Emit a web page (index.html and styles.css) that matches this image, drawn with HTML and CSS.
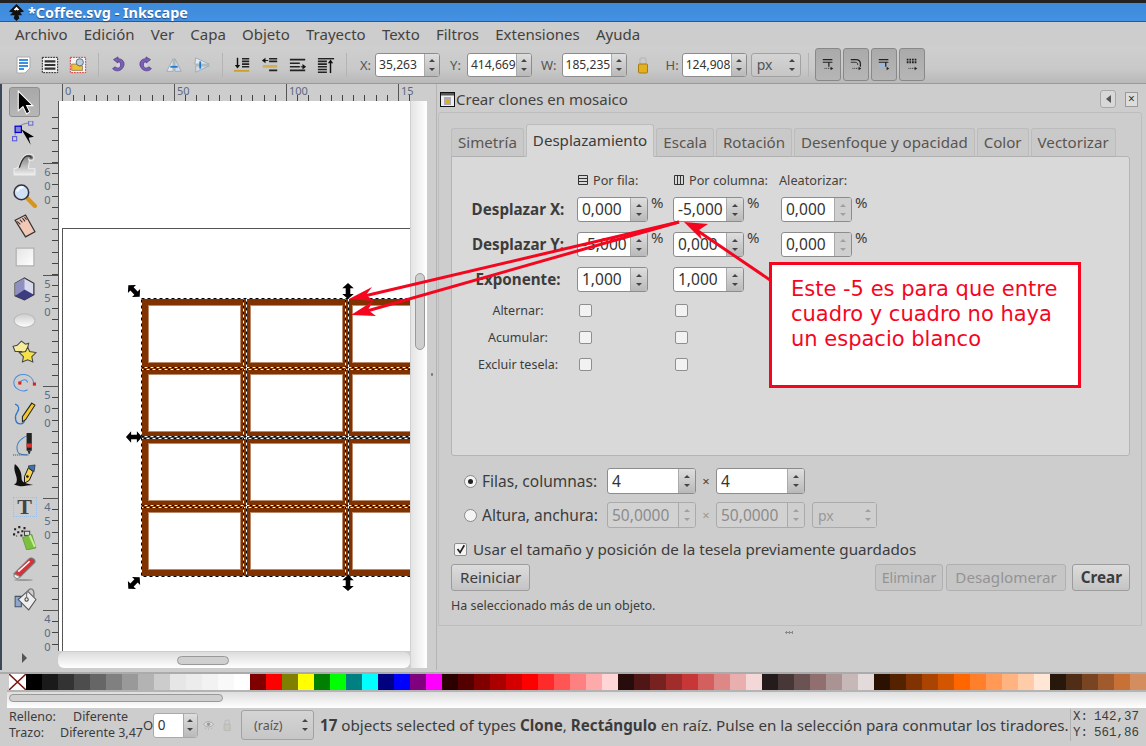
FILE: index.html
```html
<!doctype html>
<html lang="es">
    <head>
        <meta charset="UTF-8" />
        <title>*Coffee.svg - Inkscape</title>
        <link rel="stylesheet" href="styles.css">
    </head>
    <body>
        <div class="window">
            <div class="titlebar">
                <svg class="app-logo" viewBox="0 0 18 18"><path d="M9 0 L17 8 L13 9 L15 12 L11 12 L12 15 L9 18 L6 15 L7 12 L2 12 L5 9 L1 8 Z" fill="#111"/><path d="M6 6 L9 3 L12 6 L10 7 L9 6 L8 7 Z" fill="#fff"/></svg>
                <span>*Coffee.svg - Inkscape</span>
            </div>

            <div class="menubar">
                <span>Archivo</span><span>Edición</span><span>Ver</span><span>Capa</span><span>Objeto</span><span>Trayecto</span><span>Texto</span><span>Filtros</span><span>Extensiones</span><span>Ayuda</span>
            </div>

            <div class="toolbar">
                <svg class="tb-icon first" viewBox="0 0 15 18"><path d="M1 1 H14 V12 L9 17 H1 Z" fill="#fff" stroke="#aaa"/><path d="M3 4 H12 M3 7 H12 M3 10 H12 M3 13 H8" stroke="#3f8ee0" stroke-width="2"/></svg>
                <svg class="tb-icon" viewBox="0 0 20 20"><rect x="1.5" y="1.5" width="17" height="17" fill="#eee" stroke="#111" stroke-dasharray="2 1"/><path d="M4 6 H16 M4 10 H16 M4 14 H16" stroke="#333" stroke-width="2.4"/></svg>
                <svg class="tb-icon" viewBox="0 0 20 20"><rect x="1.5" y="1.5" width="17" height="17" fill="#f4f4f4" stroke="#d22" stroke-dasharray="2 1"/><path d="M3 9 H9 L11 11 H15 V16 H3 Z" fill="#f0c030" stroke="#986"/><circle cx="12" cy="7" r="4" fill="#bcd" stroke="#567"/></svg>
                <i class="tb-sep"></i>
                <svg class="tb-icon small" viewBox="0 0 20 20"><path d="M5 4 L10 1 V3 C16 3 18 8 16 12 C14 17 7 18 4 14 L7 12 C9 15 13 13 13 10 C13 7 11 6 10 6 V8 Z" fill="#7a5fb5" stroke="#4b3580" stroke-width=".8"/><circle cx="10" cy="10" r="2" fill="#d8cfee"/></svg>
                <svg class="tb-icon small" viewBox="0 0 20 20"><path d="M15 4 L10 1 V3 C4 3 2 8 4 12 C6 17 13 18 16 14 L13 12 C11 15 7 13 7 10 C7 7 9 6 10 6 V8 Z" fill="#7a5fb5" stroke="#4b3580" stroke-width=".8"/><circle cx="10" cy="10" r="2" fill="#d8cfee"/></svg>
                <svg class="tb-icon" viewBox="0 0 20 20"><path d="M9 3 V17 H2 Z" fill="#e4e8f0" stroke="#9aa"/><path d="M11 3 V17 H18 Z" fill="#d0dcf0" stroke="#9aa"/><path d="M6 12 H14" stroke="#27c" stroke-width="2"/></svg>
                <svg class="tb-icon" viewBox="0 0 20 20"><path d="M2 9 H18 L3 2 Z" fill="#e4e8f0" stroke="#9aa"/><path d="M3 11 H18 L3 18 Z" fill="#d0dcf0" stroke="#9aa"/><path d="M8 6 V14" stroke="#27c" stroke-width="2"/></svg>
                <i class="tb-sep"></i>
                <svg class="tb-icon" viewBox="0 0 20 20"><path d="M10 3 H18 M10 6 H18 M10 9 H18 M10 12 H18" stroke="#222" stroke-width="1.8"/><path d="M5 2 V11" stroke="#111" stroke-width="1.6"/><path d="M2 10 H8 L5 14 Z" fill="#111"/><path d="M1 16.5 H18" stroke="#c8a030" stroke-width="2"/></svg>
                <svg class="tb-icon" viewBox="0 0 20 20"><path d="M9 3 H18 M9 6 H18 M9 16 H18" stroke="#222" stroke-width="1.8"/><path d="M4 5 H8" stroke="#111"/><path d="M1 5 L5 2 V8 Z" fill="#111"/><rect x="2" y="10" width="16" height="3" fill="#d0b050"/></svg>
                <svg class="tb-icon" viewBox="0 0 20 20"><path d="M1 4 H18 M1 8 H12 M1 12 H12 M1 16 H18" stroke="#222" stroke-width="1.8"/><path d="M13 12 H17" stroke="#111"/><path d="M19 12 L15 9 V15 Z" fill="#111"/></svg>
                <svg class="tb-icon" viewBox="0 0 20 20"><path d="M1 3 H19" stroke="#222" stroke-width="1.6"/><path d="M1 6 H11 M1 9 H11 M1 12 H11 M1 15 H11 M1 18 H11" stroke="#222" stroke-width="1.8"/><path d="M15 7 V19" stroke="#111" stroke-width="1.6"/><path d="M12 8 H18 L15 4 Z" fill="#111"/></svg>
                <i class="tb-sep"></i>

                <span class="coord-label x">X:</span>
                <div class="spin coord"><span class="spin-val">35,263</span><span class="spin-btn"></span></div>
                <span class="coord-label y">Y:</span>
                <div class="spin coord"><span class="spin-val">414,669</span><span class="spin-btn"></span></div>
                <span class="coord-label w">W:</span>
                <div class="spin coord"><span class="spin-val">185,235</span><span class="spin-btn"></span></div>
                <svg class="lock" viewBox="0 0 12 18"><path d="M3 8 V4 C3 1 9 1 9 4 V8" fill="none" stroke="#bbb" stroke-width="1.6"/><rect x="1.5" y="8" width="9" height="9" rx="1" fill="#e2b020" stroke="#a87c10"/></svg>
                <span class="coord-label h">H:</span>
                <div class="spin coord"><span class="spin-val">124,908</span><span class="spin-btn"></span></div>
                <div class="combo unit"><span>px</span><span class="spin-btn plain"></span></div>
                <i class="tb-sep wide"></i>
                <div class="toggles">
                    <div class="toggle"><svg viewBox="0 0 16 16"><path d="M2 3 H13 M2 6 H13 M9 6 V11" stroke="#222" stroke-width="1.4" fill="none"/><path d="M4 13 H11" stroke="#222" stroke-dasharray="1 1"/><path d="M11 11 L14 13 L11 15 Z" fill="#222"/></svg></div>
                    <div class="toggle"><svg viewBox="0 0 16 16"><path d="M2 3 H8 C11 3 13 5 13 8 V11" stroke="#222" stroke-width="1.4" fill="none"/><path d="M2 6 H7 C9 6 10 7 10 9" stroke="#222" fill="none"/><path d="M4 13 H11" stroke="#222" stroke-dasharray="1 1"/><path d="M11 11 L14 13 L11 15 Z" fill="#222"/></svg></div>
                    <div class="toggle"><svg viewBox="0 0 16 16"><rect x="2" y="7" width="8" height="5" fill="#9db8d8"/><path d="M2 3 H13 M2 6 H13 M10 6 V11" stroke="#222" stroke-width="1.4" fill="none"/><path d="M11 11 L14 13 L11 15 Z" fill="#222"/></svg></div>
                    <div class="toggle"><svg viewBox="0 0 16 16"><path d="M2 3 H13 M2 6 H13" stroke="#222" stroke-width="2.2" stroke-dasharray="2 1" fill="none"/><path d="M4 13 H11" stroke="#222" stroke-dasharray="1 1" fill="none"/><path d="M11 11 L14 13 L11 15 Z" fill="#222"/></svg></div>
                </div>
            </div>

            <div class="workspace">
                <div class="toolbox">
                    <div class="tool active"><svg viewBox="0 0 24 24"><path d="M6 1 V20 L10.500 16 L14 23 L17 21 L14 15 H20 Z" fill="#000" stroke="#fff" stroke-width="1"/></svg></div>
                    <div class="tool"><svg viewBox="0 0 24 24"><path d="M3 14 C3 6 8 3 16 2" fill="none" stroke="#889"/><rect x="0.500" y="15" width="4" height="4" fill="none" stroke="#55d"/><rect x="16" y="0" width="4" height="4" fill="none" stroke="#66d"/><rect x="3" y="5" width="6" height="6" fill="#88c" stroke="#00d" stroke-width="1.200"/><path d="M9 8 L21 15 L16 16 L18 23 Z" fill="#000"/></svg></div>
                    <div class="tool"><svg viewBox="0 0 24 24"><defs><linearGradient id="tw" x1="0" y1="0" x2="0" y2="1"><stop offset="0" stop-color="#777"/><stop offset="1" stop-color="#eee"/></linearGradient></defs><path d="M2 22 V16 C8 16 7 10 10 6 C13 1 20 1 21 5 C22 9 16 8 16 7 C18 10 15 12 16 16 H22 V22 Z" fill="url(#tw)" stroke="#eee"/><path d="M7 15 C9 10 10 5 14 4 C17 3 19 5 18 6" fill="none" stroke="#333" stroke-width="1.300"/></svg></div>
                    <div class="tool"><svg viewBox="0 0 24 24"><path d="M14 14 L22 22" stroke="#d8941a" stroke-width="4" stroke-linecap="round"/><circle cx="9" cy="9" r="7" fill="#cfe2f5" stroke="#334" stroke-width="1.500"/><path d="M5 8 C6 5 8 4 11 4" stroke="#fff" stroke-width="2" fill="none"/></svg></div>
                    <div class="tool"><svg viewBox="0 0 24 24"><path d="M3 6 L13 1 L22 17 L13 22 Z" fill="#f3c8b4" stroke="#333" stroke-width="1.200"/><path d="M5 7 L8 10 M7.500 5.500 L10 8 M10 4 L12.500 7 M12 3 L14 5.500" stroke="#333"/></svg></div>
                    <div class="tool"><svg viewBox="0 0 24 24"><defs><linearGradient id="rc" x1="0" y1="0" x2="1" y2="1"><stop offset="0" stop-color="#e4e4e4"/><stop offset="1" stop-color="#fff"/></linearGradient></defs><rect x="4" y="3" width="17" height="17" fill="url(#rc)" stroke="#aaa"/></svg></div>
                    <div class="tool"><svg viewBox="0 0 24 24"><path d="M12 1 L21 6 V17 L12 22 L3 18 V6 Z" fill="#d8d8ee" stroke="#333" stroke-width="1.200"/><path d="M12 1 V12 L3 18 V6 Z" fill="#8f8fc0"/><path d="M12 12 L21 17 L12 22 L3 18 Z" fill="#3c3c80"/></svg></div>
                    <div class="tool"><svg viewBox="0 0 24 24"><defs><linearGradient id="el" x1="0" y1="0" x2="0" y2="1"><stop offset="0" stop-color="#ccc"/><stop offset="1" stop-color="#fff"/></linearGradient></defs><ellipse cx="12" cy="12" rx="10" ry="6.500" fill="url(#el)" stroke="#bbb"/></svg></div>
                    <div class="tool"><svg viewBox="0 0 24 24"><path d="M9 2 L13 5 L16 4 L15 9 L12 14 L9 12 H3 L1 7 L5 6 Z" fill="#f7ec9c" stroke="#444"/><path d="M15 8 L17 12 L23 13 L19 17 L20 22 L15 20 L10 22 L11 17 L7 13 L13 12 Z" fill="#f3e04a" stroke="#444"/></svg></div>
                    <div class="tool"><svg viewBox="0 0 24 24"><path d="M21 13 C20 3 5 1 2 10 C0 18 10 22 15 19" fill="none" stroke="#4a8ee0" stroke-width="1"/><path d="M8 13 C8 9 14 8 15 12" fill="none" stroke="#4a8ee0"/><rect x="6" y="11" width="3" height="3" fill="#d22"/><rect x="20" y="12" width="3" height="3" fill="#d22"/></svg></div>
                    <div class="tool"><svg viewBox="0 0 24 24"><path d="M3 3 C6 4 8 7 5 11 C2 15 3 22 8 22 C11 22 12 20 12 18" fill="none" stroke="#2f75c8" stroke-width="1.200"/><path d="M19 2 L22 4 L13 18 L10 20 L10 15 Z" fill="#f0c830" stroke="#222"/></svg></div>
                    <div class="tool"><svg viewBox="0 0 24 24"><path d="M16 3 C8 6 2 12 6 20 C7 21 9 22 16 22" fill="none" stroke="#3a7ec8"/><path d="M1 22 H14" stroke="#445" stroke-dasharray="1 1"/><rect x="14" y="1" width="5" height="17" fill="#222"/><rect x="14" y="11" width="5" height="4" fill="#d33"/><path d="M15 18 H18 L17 21 H16 Z" fill="#333"/></svg></div>
                    <div class="tool"><svg viewBox="0 0 26 26"><path d="M3 1 C1 8 5 12 5 17 C5 21 4 22 2 22 C10 26 14 23 22 23 C16 21 10 21 10 16 C10 11 9 6 3 1 Z" fill="#111"/><path d="M17 5 L22 9 L18 18 L13 21 L13 14 Z" fill="#f3d050" stroke="#111"/><path d="M17 3 L24 2 L23 9 L18 6 Z" fill="#3f70b0" stroke="#111" stroke-width=".6"/><circle cx="16" cy="14" r="1.300" fill="#111"/></svg></div>
                    <div class="tool text-tool"><span class="t-glyph">T</span></div>
                    <div class="tool"><svg viewBox="0 0 24 24"><path d="M2 3 h2 v2 h-2z M6 1 h2 v2 h-2z M5 6 h2 v2 h-2z M1 8 h2 v2 h-2z M9 5 h2 v2 h-2z M8 9 h2 v2 h-2z M11 2 h2 v2 h-2z M4 10 h1 v1 h-1z" fill="#222"/><rect x="12" y="6" width="5" height="4" fill="#ddd" stroke="#444"/><path d="M10 12 L19 9 L23 22 L14 24 Z" fill="#7cc040" stroke="#4c8c20" stroke-width=".6"/><path d="M17 10 L22 21" stroke="#c8ec98" stroke-width="2"/></svg></div>
                    <div class="tool"><svg viewBox="0 0 24 24"><path d="M2 17 L16 3 C18 1 20 2 21 3 C23 5 22 6 21 7 L8 20 H4 Z" fill="#d6323a" stroke="#777"/><path d="M2 17 L8 20 L5 22 L2 20 Z" fill="#eee" stroke="#888"/><path d="M6 15 L17 5" stroke="#fff" stroke-width="1.500"/><ellipse cx="11" cy="23" rx="9" ry="1" fill="#999"/></svg></div>
                    <div class="tool"><svg viewBox="0 0 24 24"><path d="M3 9 H9 V19 H3 Z" fill="#8ea6d0" stroke="#456"/><path d="M6 12 L15 4 L23 12 L16 22 Z" fill="#eee" stroke="#555"/><path d="M14 10 C13 2 20 -1 21 5 L21 10" fill="none" stroke="#777" stroke-width="1.200"/><circle cx="14" cy="12" r="1.600" fill="none" stroke="#444"/></svg></div>
                    <div class="tool more"><i class="more-arrow"></i></div>
                </div>

                <div class="canvas-area">
                    <div class="ruler-top">
                        <span class="rt-num n0">0</span><span class="rt-num n50">50</span><span class="rt-num n100">100</span><span class="rt-num n150">15</span>
                    </div>
                    <div class="ruler-left">
                        <span class="rl-num r600">600</span>
                        <span class="rl-num r550">550</span>
                        <span class="rl-num r500">500</span>
                        <span class="rl-num r450">450</span>
                        <span class="rl-num r400">400</span>
                    </div>
                    <div class="canvas">
                        <div class="page"></div>
                        <svg id="tiles" class="tiles" width="351" height="550"></svg>
                        <svg class="handles" width="351" height="550">
                            <defs>
                                <path id="dbl" d="M-7 0 L-2.500 -5 V-2 H2.500 V-5 L7 0 L2.500 5 V2 H-2.500 V5 Z" fill="#000"/>
                            </defs>
                            <use href="#dbl" transform="translate(75 190) rotate(45) scale(1.150)"/>
                            <use href="#dbl" transform="translate(289 190) rotate(90) scale(1.150)"/>
                            <use href="#dbl" transform="translate(75 336) scale(1.150)"/>
                            <use href="#dbl" transform="translate(75 482) rotate(-45) scale(1.150)"/>
                            <use href="#dbl" transform="translate(289 482) rotate(90) scale(1.150)"/>
                        </svg>
                    </div>
                    <div class="vscroll"><div class="vthumb"></div></div>
                    <div class="hscroll-canvas"><div class="hthumb"></div></div>
                </div>

                <div class="pane-grip"></div>

                <div class="dialog">
                    <div class="dialog-head">
                        <svg class="dialog-icon" viewBox="0 0 15 15"><rect x=".5" y=".5" width="14" height="14" fill="#eee" stroke="#111"/><rect x="1" y="1" width="13" height="2.500" fill="#555"/><path d="M4 5 H11 V13 H4 Z" fill="#aab"/><rect x="6" y="8" width="3" height="4" fill="#d8b030"/></svg>
                        <span class="dialog-title">Crear clones en mosaico</span>
                        <div class="dock-btn"><i></i></div>
                        <div class="close-btn">×</div>
                    </div>
                    <div class="dialog-body">
                        <div class="tabs">
                            <span class="tab tab-sim">Simetría</span>
                            <span class="tab active">Desplazamiento</span>
                            <span class="tab">Escala</span>
                            <span class="tab">Rotación</span>
                            <span class="tab">Desenfoque y opacidad</span>
                            <span class="tab">Color</span>
                            <span class="tab">Vectorizar</span>
                        </div>
                        <div class="notebook">
                            <div class="offset-grid">
                                <span></span>
                                <span class="col-head"><svg viewBox="0 0 12 12"><path d="M1.500 1.500 H10.500 V10.500 H1.500 Z M1.500 4.500 H10.500 M1.500 7.500 H10.500" fill="none" stroke="#333"/></svg>Por fila:</span>
                                <span class="col-head"><svg viewBox="0 0 12 12"><path d="M1.500 1.500 H10.500 V10.500 H1.500 Z M4.500 1.500 V10.500 M7.500 1.500 V10.500" fill="none" stroke="#333"/></svg>Por columna:</span>
                                <span class="col-head plain">Aleatorizar:</span>

                                <span class="row-label">Desplazar X:</span>
                                <div class="cell"><div class="spin num"><span class="spin-val">0,000</span><span class="spin-btn"></span></div><span class="pct">%</span></div>
                                <div class="cell"><div class="spin num"><span class="spin-val">-5,000</span><span class="spin-btn"></span></div><span class="pct">%</span></div>
                                <div class="cell"><div class="spin num"><span class="spin-val">0,000</span><span class="spin-btn faded"></span></div><span class="pct">%</span></div>

                                <span class="row-label">Desplazar Y:</span>
                                <div class="cell"><div class="spin num"><span class="spin-val">-5,000</span><span class="spin-btn"></span></div><span class="pct">%</span></div>
                                <div class="cell"><div class="spin num"><span class="spin-val">0,000</span><span class="spin-btn"></span></div><span class="pct">%</span></div>
                                <div class="cell"><div class="spin num"><span class="spin-val">0,000</span><span class="spin-btn faded"></span></div><span class="pct">%</span></div>

                                <span class="row-label">Exponente:</span>
                                <div class="cell"><div class="spin num"><span class="spin-val">1,000</span><span class="spin-btn"></span></div></div>
                                <div class="cell"><div class="spin num"><span class="spin-val">1,000</span><span class="spin-btn"></span></div></div>
                                <span></span>

                                <span class="check-label">Alternar:</span>
                                <div class="cell"><i class="check"></i></div>
                                <div class="cell"><i class="check"></i></div>
                                <span></span>

                                <span class="check-label">Acumular:</span>
                                <div class="cell"><i class="check"></i></div>
                                <div class="cell"><i class="check"></i></div>
                                <span></span>

                                <span class="check-label">Excluir tesela:</span>
                                <div class="cell"><i class="check"></i></div>
                                <div class="cell"><i class="check"></i></div>
                                <span></span>
                            </div>
                        </div>

                        <div class="size-row">
                            <i class="radio on"></i>
                            <span class="size-label">Filas, columnas:</span>
                            <div class="spin size"><span class="spin-val">4</span><span class="spin-btn"></span></div>
                            <span class="times">×</span>
                            <div class="spin size"><span class="spin-val">4</span><span class="spin-btn"></span></div>
                        </div>
                        <div class="size-row">
                            <i class="radio"></i>
                            <span class="size-label">Altura, anchura:</span>
                            <div class="spin size off"><span class="spin-val">50,0000</span><span class="spin-btn faded"></span></div>
                            <span class="times off-text">×</span>
                            <div class="spin size off"><span class="spin-val">50,0000</span><span class="spin-btn faded"></span></div>
                            <div class="combo unit-off"><span>px</span><span class="spin-btn plain faded"></span></div>
                        </div>
                        <div class="use-saved">
                            <i class="check checked"><svg viewBox="0 0 13 13"><path d="M3 6 L6 10 L11 1.500" fill="none" stroke="#222" stroke-width="2"/></svg></i>
                            <span>Usar el tamaño y posición de la tesela previamente guardados</span>
                        </div>
                        <div class="button-row">
                            <span class="btn reset">Reiniciar</span>
                            <span class="btn off b-elim">Eliminar</span>
                            <span class="btn off">Desaglomerar</span>
                            <span class="btn primary">Crear</span>
                        </div>
                        <div class="dialog-status">Ha seleccionado más de un objeto.</div>
                    </div>
                    <div class="dialog-grip"></div>
                </div>
            </div>

            <div id="palette" class="palette"><span class="swatch none"><svg viewBox="0 0 17 16"><path d="M0 0 L17 16 M17 0 L0 16" stroke="#7a1414" stroke-width="1.500"/></svg></span></div>
            <div class="palette-scroll"><div class="palette-thumb"></div></div>

            <div class="statusbar">
                <div class="style-info">
                    <span>Relleno:</span><span class="val-a">Diferente</span>
                    <span>Trazo:</span><span class="val-b">Diferente 3,47</span>
                </div>
                <span class="opacity-label">O:</span>
                <div class="spin opacity"><span class="spin-val">0</span><span class="spin-btn"></span></div>
                <svg class="eye" viewBox="0 0 16 16"><path d="M1 7 C4 2 12 2 15 7 C12 12 4 12 1 7 Z" fill="#ddd" stroke="#999"/><circle cx="8" cy="7" r="2.500" fill="#999"/><path d="M3 12 L4 14 M8 13 V15 M13 12 L12 14" stroke="#aaa"/></svg>
                <svg class="lock-off" viewBox="0 0 12 18"><path d="M3 8 V4 C3 1 9 1 9 4 V8" fill="none" stroke="#bbb" stroke-width="1.600"/><rect x="1.500" y="8" width="9" height="9" rx="1" fill="#c6c6c0" stroke="#b4b4ac"/></svg>
                <div class="combo layer"><span>(raíz)</span><span class="spin-btn plain"></span></div>
                <div class="message"><b>17</b> objects selected of types <b>Clone</b>, <b>Rectángulo</b> en raíz. Pulse en la selección para conmutar los tiradores.</div>
                <div class="cursor-pos">
                    <span>X:</span><span>142,37</span>
                    <span>Y:</span><span>561,86</span>
                </div>
            </div>

            <svg class="marks" width="1146" height="746">
                <g fill="none" stroke="#f5061f" stroke-width="3">
                    <path d="M679 222 L360 297"/>
                    <path d="M679 222 L360 313"/>
                    <path d="M770 280 L695 229"/>
                </g>
                <g fill="#f5061f">
                    <path d="M349 299 L372 287 L366 295 L374 301 Z"/>
                    <path d="M351 315 L373 301 L368 310 L376 316 Z"/>
                    <path d="M684 222 L708 224 L699 230 L702 240 Z"/>
                </g>
            </svg>
            <div class="note">Este -5 es para que entre cuadro y cuadro no haya un espacio blanco</div>
        </div>
        <script src="script.js"></script>
    </body>
</html>
```

FILE: styles.css
```css
html,
body {
    margin: 0;
    height: 100%;
    overflow: hidden;
}
body {
    font-family: "Noto Sans", "Open Sans", sans-serif;
    font-size: 14px;
    color: #3c3c3c;
    background-color: #cdcdcd;
}
svg {
    display: block;
}
.window {
    position: relative;
    width: 1146px;
    height: 746px;
    overflow: hidden;
    display: flex;
    flex-direction: column;
    background-color: #cdcdcd;
    border-top: 3px solid #222;
    box-sizing: border-box;
}

/* title and menu */
.titlebar {
    height: 19px;
    flex: none;
    box-sizing: border-box;
    display: flex;
    align-items: center;
    gap: 3px;
    padding-left: 8px;
    background: linear-gradient(#3d8bdc, #4490e2);
    border-bottom: 1px solid #2a5a90;
    color: #fff;
    font-weight: bold;
    font-size: 14.4px;
    text-shadow: 0 1px 1px #1d4f88;
}
.app-logo {
    width: 17px;
    height: 17px;
}
.menubar {
    height: 24px;
    flex: none;
    display: flex;
    align-items: center;
    gap: 16.2px;
    padding-left: 15px;
    font-size: 15px;
    color: #45413c;
}

/* top toolbar */
.toolbar {
    height: 38px;
    flex: none;
    display: flex;
    align-items: center;
    padding-left: 16px;
    background: linear-gradient(#cfcfcf, #c9c9c9 60%, #b9b9b9);
    border-bottom: 1px solid #999;
    box-sizing: border-box;
}
.tb-icon {
    width: 18px;
    height: 18px;
    margin-right: 10px;
}
.tb-icon.first {
    width: 15px;
    margin-right: 10px;
}
.tb-sep {
    width: 1px;
    height: 24px;
    background-color: #b4b4b4;
    margin: 0 10px 0 1px;
}
.tb-sep.wide {
    margin: 0 6px 0 7px;
}
.coord-label {
    font-size: 13px;
    color: #555;
}
.coord-label.x {
    margin: 0 4px 0 3px;
}
.coord-label.y {
    margin: 0 6px 0 10px;
}
.coord-label.w {
    margin: 0 5px 0 9px;
}
.coord-label.h {
    margin: 0 3px 0 17px;
}
.lock {
    width: 12px;
    height: 18px;
    margin-left: 10px;
}

/* spin buttons and combo boxes */
.spin {
    display: flex;
    flex: none;
    box-sizing: border-box;
    border: 1px solid #8c8c8c;
    border-radius: 3px;
    background-color: #fff;
    color: #333;
    overflow: hidden;
}
.spin-val {
    flex: 1;
    min-width: 0;
    display: flex;
    align-items: center;
    padding-left: 4px;
    white-space: nowrap;
}
.spin-btn {
    position: relative;
    display: block;
    flex: none;
    width: 16px;
    border-left: 1px solid #aaa;
    background: linear-gradient(#dedede, #b9b9b9);
}
.spin-btn::before,
.spin-btn::after {
    content: "";
    position: absolute;
    left: 50%;
    margin-left: -3px;
    border-left: 3px solid transparent;
    border-right: 3px solid transparent;
}
.spin-btn::before {
    top: 50%;
    margin-top: -6px;
    border-bottom: 3px solid #444;
}
.spin-btn::after {
    top: 50%;
    margin-top: 3px;
    border-top: 3px solid #444;
}
.spin-btn.plain {
    background: none;
    border-left: none;
}
.spin-btn.faded {
    background: #cfcfcf;
}
.spin-btn.faded::before {
    border-bottom-color: #a0a0a0;
}
.spin-btn.faded::after {
    border-top-color: #a0a0a0;
}
.spin.coord {
    width: 65px;
    height: 24px;
    font-size: 12.1px;
}
.spin.coord .spin-val {
    padding-left: 3px;
}
.spin.coord .spin-btn {
    width: 14px;
}
.combo {
    display: flex;
    flex: none;
    box-sizing: border-box;
    justify-content: space-between;
    border: 1px solid #a2a2a2;
    border-radius: 3px;
    background: linear-gradient(#d4d4d4, #c6c6c6);
    color: #555;
    font-size: 14px;
}
.combo > span:first-child {
    align-self: center;
}
.combo.unit {
    width: 50px;
    height: 24px;
    margin-left: 4px;
    padding-left: 5px;
}
.toggles {
    display: flex;
    gap: 2px;
}
.toggle {
    width: 26px;
    height: 33px;
    box-sizing: border-box;
    padding: 8px 5px;
    border: 1px solid #888;
    border-radius: 3px;
    background: linear-gradient(#aaa, #b6b6b6);
}

/* main area */
.workspace {
    height: 586px;
    flex: none;
    display: flex;
}
.toolbox {
    width: 41px;
    flex: none;
    box-sizing: border-box;
    border-left: 2px solid #3c4858;
    padding: 3px 0 0 7px;
    display: flex;
    flex-direction: column;
}
.tool {
    width: 31px;
    height: 31.100px;
    flex: none;
    box-sizing: border-box;
    padding: 3px;
    display: flex;
    align-items: center;
    justify-content: center;
}
.tool svg {
    width: 25px;
    height: 25px;
    flex: none;
}
.tool.active {
    height: 30px;
    margin-bottom: 1px;
    border: 1px solid #8f8f8f;
    border-radius: 3px;
    background: linear-gradient(#a8a8a8, #b6b6b6);
}
.t-glyph {
    width: 22px;
    height: 18px;
    border: 1px dotted #9cc0ea;
    font-family: "Liberation Serif", serif;
    font-weight: bold;
    font-size: 22px;
    line-height: 18px;
    text-align: center;
    color: #444;
}
.more {
    margin-top: 27px;
}
.more-arrow {
    border-left: 5px solid #555;
    border-top: 5px solid transparent;
    border-bottom: 5px solid transparent;
}

.canvas-area {
    position: relative;
    width: 387px;
    flex: none;
}
.ruler-top {
    position: absolute;
    left: 17px;
    top: 0;
    width: 356px;
    height: 17px;
    border-left: 1px solid transparent;
    overflow: hidden;
    background-image:
        repeating-linear-gradient(to right, transparent 0, transparent 10.200px, #444 10.200px, #444 11.200px);
    background-size: 352px 6px;
    background-position: 4px bottom;
    background-repeat: no-repeat;
}
.rt-num {
    position: absolute;
    top: 0;
    padding-left: 2px;
    height: 17px;
    border-left: 1px solid #555;
    font-size: 11px;
    line-height: 13px;
    color: #5a6a82;
}
.n0 { left: 3px; }
.n50 { left: 115px; }
.n100 { left: 227px; }
.n150 { left: 339px; }
.ruler-left {
    position: absolute;
    left: 0;
    top: 17px;
    width: 17px;
    height: 550px;
    border-right: 1px solid #555;
    background-image:
        repeating-linear-gradient(to bottom, transparent 0, transparent 10.200px, #444 10.200px, #444 11.200px);
    background-size: 6px 100%;
    background-position: right 6px;
    background-repeat: no-repeat;
}
.rl-num {
    position: absolute;
    left: 2px;
    width: 8px;
    padding-right: 7px;
    border-top: 1px solid #555;
    writing-mode: vertical-rl;
    text-orientation: upright;
    letter-spacing: -1px;
    font-size: 11px;
    line-height: 8px;
    color: #5a6a82;
}
.r600 { top: 62px; }
.r550 { top: 174px; }
.r500 { top: 285px; }
.r450 { top: 397px; }
.r400 { top: 509px; }
.canvas {
    position: absolute;
    left: 18px;
    top: 17px;
    width: 351px;
    height: 550px;
    background-color: #fff;
    overflow: hidden;
}
.page {
    position: absolute;
    left: 3px;
    top: 127px;
    width: 400px;
    height: 500px;
    border: 1px solid #555;
}
.tiles,
.handles {
    position: absolute;
    left: 0;
    top: 0;
}
.vscroll {
    position: absolute;
    left: 369px;
    top: 17px;
    width: 17px;
    height: 567px;
    background: linear-gradient(to right, #e4e4e4, #fff);
    border-left: 1px solid #d0d0d0;
    box-sizing: border-box;
}
.vthumb {
    position: absolute;
    left: 4px;
    top: 172px;
    width: 8px;
    height: 75px;
    border: 1px solid #999;
    border-radius: 5px;
    background-color: #cfcfcf;
}
.hscroll-canvas {
    position: absolute;
    left: 17px;
    top: 568px;
    width: 352px;
    height: 16px;
    border-radius: 6px;
    background: linear-gradient(#dcdcdc, #fff);
}
.hthumb {
    position: absolute;
    left: 119px;
    top: 4px;
    width: 50px;
    height: 7px;
    border: 1px solid #999;
    border-radius: 5px;
    background-color: #cfcfcf;
}
.pane-grip {
    width: 8px;
    flex: none;
    background:
        radial-gradient(circle, #777 1px, transparent 1.500px) center 289px / 4px 3px no-repeat;
}

/* tile dialog */
.dialog {
    flex: 1;
    min-width: 0;
    box-sizing: border-box;
    padding: 0 4px 0 0;
    border-left: 1px solid #b4b4b4;
}
.dialog-head {
    box-sizing: border-box;
    height: 28px;
    display: flex;
    align-items: center;
    padding: 2px 4px 0 3px;
}
.dialog-icon {
    width: 15px;
    height: 15px;
    margin-right: 1px;
}
.dialog-title {
    flex: 1;
    font-size: 15px;
    color: #45413c;
}
.dock-btn {
    width: 16px;
    height: 18px;
    box-sizing: border-box;
    border: 1px solid #a8a8a8;
    border-radius: 3px;
    background-color: #d8d8d8;
    margin-right: 9px;
    display: flex;
    align-items: center;
    justify-content: center;
}
.dock-btn i {
    border-right: 5px solid #555;
    border-top: 4px solid transparent;
    border-bottom: 4px solid transparent;
}
.close-btn {
    width: 11px;
    height: 13px;
    border: 1px solid #999;
    background-color: #ddd;
    font-size: 12px;
    line-height: 12px;
    text-align: center;
    color: #333;
}
.dialog-body {
    box-sizing: border-box;
    height: 514px;
    margin-left: 1px;
    padding: 11px 11px 0 12px;
    border: 1px solid #bdbdbd;
    border-radius: 3px 3px 0 0;
    font-size: 15.2px;
}
.tabs {
    display: flex;
    align-items: flex-end;
    gap: 2px;
    height: 33px;
    position: relative;
    z-index: 1;
    margin-bottom: -1px;
    font-size: 15.100px;
}
.tab {
    box-sizing: border-box;
    height: 29px;
    padding: 3px 6px 0;
    border: 1px solid #bcbcbc;
    border-bottom: 1px solid #b0b0b0;
    border-radius: 3px 3px 0 0;
    background-color: #c9c9c9;
    color: #5a5550;
    white-space: nowrap;
}
.tab.active {
    height: 33px;
    padding-top: 5px;
    background-color: #d9d9d9;
    border-bottom-color: #d9d9d9;
    color: #3c3c3c;
}
.notebook {
    box-sizing: border-box;
    height: 300px;
    background-color: #d9d9d9;
    border: 1px solid #b4b4b4;
    border-radius: 0 3px 3px 3px;
}
.offset-grid {
    display: grid;
    grid-template-columns: 94px 84px 96px 1fr;
    grid-template-rows: 22px 25px 25px 25px 17px 17px 17px;
    column-gap: 12px;
    row-gap: 10px;
    padding: 8px 0 0 19px;
    align-items: center;
}
.col-head {
    display: flex;
    align-items: center;
    gap: 4px;
    align-self: end;
    margin-bottom: -2px;
    font-size: 12.700px;
    color: #45413c;
    white-space: nowrap;
}
.col-head svg {
    width: 12px;
    height: 12px;
}
.col-head.plain {
    margin-left: -2px;
}
.row-label {
    margin-top: -2px;
    font-weight: bold;
    font-size: 15.200px;
    text-align: center;
    white-space: nowrap;
}
.check-label {
    font-size: 12.500px;
    text-align: center;
    white-space: nowrap;
}
.cell {
    display: flex;
}
.spin.num {
    width: 71px;
    height: 25px;
    font-size: 15.500px;
}
.spin.num .spin-val {
    padding-bottom: 2px;
}
.pct {
    margin: -5px 0 0 3px;
    font-size: 15px;
}
.check {
    display: block;
    box-sizing: border-box;
    width: 13px;
    height: 13px;
    margin-left: 2px;
    border: 1px solid #8f8f8f;
    border-radius: 2px;
    background-color: #f2f2f2;
}
.size-row {
    display: flex;
    align-items: center;
    height: 26px;
    margin-top: 8px;
    padding-left: 13px;
}
.notebook + .size-row {
    margin-top: 12px;
}
.radio {
    position: relative;
    display: block;
    box-sizing: border-box;
    width: 13px;
    height: 13px;
    border: 1px solid #888;
    border-radius: 50%;
    background-color: #f4f4f4;
    flex: none;
}
.radio.on::after {
    content: "";
    position: absolute;
    left: 3px;
    top: 3px;
    width: 5px;
    height: 5px;
    border-radius: 50%;
    background-color: #222;
}
.size-label {
    width: 130px;
    padding-left: 5px;
    box-sizing: border-box;
    white-space: nowrap;
    font-size: 15.500px;
}
.spin.size {
    width: 89px;
    height: 26px;
    font-size: 15.500px;
}
.spin.size.off {
    background-color: #d2d2d2;
    border-color: #aaa;
    color: #8c8c8c;
}
.times {
    width: 20px;
    text-align: center;
    font-size: 13px;
    color: #444;
}
.times.off-text {
    color: #999;
}
.combo.unit-off {
    width: 65px;
    height: 26px;
    margin-left: 7px;
    padding-left: 5px;
    color: #999;
    background: #cecece;
    border-color: #aaa;
}
.use-saved {
    display: flex;
    align-items: center;
    gap: 6px;
    height: 20px;
    margin-top: 11px;
    padding-left: 3px;
}
.use-saved .check {
    margin: 0;
    background-color: #f4f4f4;
}
.use-saved .check svg {
    width: 11px;
    height: 11px;
}
.button-row {
    display: flex;
    gap: 3px;
    margin-top: 5px;
}
.btn {
    box-sizing: border-box;
    height: 27px;
    padding: 2px 8px 0;
    border: 1px solid #9c9c9c;
    border-radius: 3px;
    background: linear-gradient(#dcdcdc, #c4c4c4);
    white-space: nowrap;
}
.btn.off {
    color: #949494;
    background: #c6c6c6;
    border-color: #b0b0b0;
}
.b-elim {
    margin-left: auto;
    padding: 2px 6px 0;
    font-size: 14.200px;
    line-height: 22px;
}
.btn.primary {
    margin-left: 3px;
    padding-right: 7px;
    font-weight: bold;
}
.dialog-status {
    margin-top: 6px;
    font-size: 12.500px;
}
.dialog-grip {
    width: 8px;
    height: 3px;
    margin: 5px 0 0 348px;
    background-image: radial-gradient(circle, #888 1px, transparent 1.200px);
    background-size: 3px 3px;
}

/* palette and status */
.palette {
    display: flex;
    flex: none;
    height: 18px;
    margin-top: 2px;
    padding-left: 9px;
    border-top: 2px solid #ababab;
    box-sizing: border-box;
}
.swatch {
    display: block;
    width: 16px;
    height: 16px;
    flex: none;
}
.swatch.none {
    width: 17px;
    background-color: #fff;
}
.palette-scroll {
    position: relative;
    height: 18px;
    flex: none;
    margin-left: 7px;
    border-top: 2px solid #b4b4b4;
    box-sizing: border-box;
    background: linear-gradient(#dedede, #fff);
}
.palette-thumb {
    position: absolute;
    left: 2px;
    top: 2px;
    width: 212px;
    height: 6px;
    border: 1px solid #999;
    border-radius: 5px;
    background-color: #cfcfcf;
}
.statusbar {
    height: 38px;
    flex: none;
    box-sizing: border-box;
    display: flex;
    align-items: center;
    font-size: 12.500px;
    padding: 0 0 4px 9px;
    overflow: hidden;
}
.style-info {
    display: grid;
    grid-template-columns: 51px auto;
    line-height: 16px;
    width: 134px;
    flex: none;
    white-space: nowrap;
}
.val-a {
    padding-left: 13px;
}
.opacity-label {
    font-size: 13px;
}
.spin.opacity {
    width: 45px;
    height: 25px;
    font-size: 13.500px;
    margin-left: -4px;
    border-color: #aaa;
}
.spin.opacity .spin-btn {
    width: 13px;
}
.eye {
    width: 16px;
    height: 16px;
    margin-left: 5px;
}
.lock-off {
    width: 12px;
    height: 18px;
    margin-left: 9px;
}
.combo.layer {
    width: 73px;
    height: 30px;
    margin-left: 10px;
    padding-left: 12px;
    font-size: 12.500px;
}
.message {
    margin-left: 6px;
    font-size: 15.200px;
    white-space: nowrap;
    width: 750px;
    flex: none;
}
.message b {
    color: #3c3c3c;
}
.cursor-pos {
    padding-left: 2px;
    border-left: 1px solid #b0b0b0;
    display: grid;
    grid-template-columns: 21px 52px;
    font-family: "Liberation Mono", monospace;
    font-size: 12.500px;
    line-height: 16px;
}

/* hand drawn marks over the screenshot */
.marks {
    position: absolute;
    left: 0;
    top: -3px;
    pointer-events: none;
}
.note {
    position: absolute;
    left: 769px;
    top: 259px;
    box-sizing: border-box;
    width: 312px;
    height: 126px;
    padding: 12px 10px 0 19px;
    border: 3px solid #f5061f;
    background-color: #fff;
    color: #f5061f;
    font-family: "DejaVu Sans", sans-serif;
    font-size: 21px;
    line-height: 25px;
}
```

FILE: script.js
```js
// Colour swatches for the bottom palette
const colours = [
    "#000000", "#1a1a1a", "#333333", "#4d4d4d", "#666666", "#808080", "#999999", "#b3b3b3", "#cccccc", "#e6e6e6", "#ececec", "#f2f2f2", "#f9f9f9", "#ffffff",
    "#800000", "#ff0000", "#808000", "#ffff00", "#008000", "#00ff00", "#008080", "#00ffff", "#000080", "#0000ff", "#800080", "#ff00ff",
    "#2b0000", "#550000", "#800000", "#aa0000", "#d40000", "#ff0000", "#ff2a2a", "#ff5555", "#ff8080", "#ffaaaa", "#ffd5d5",
    "#280b0b", "#501616", "#782121", "#a02c2c", "#c83737", "#d35f5f", "#de8787", "#e9afaf", "#f4d7d7",
    "#241c1c", "#483737", "#6c5353", "#916f6f", "#ac9393", "#c8b7b7", "#e3dbdb",
    "#2b1100", "#552200", "#803300", "#aa4400", "#d45500", "#ff6600", "#ff7f2a", "#ff9955", "#ffb380", "#ffccaa", "#ffe6d5",
    "#28170b", "#502d16", "#784421", "#a05a2c", "#c87137", "#d38d5f",
];
const palette = document.getElementById("palette");
colours.forEach(function (colour) {
    const swatch = document.createElement("span");
    swatch.className = "swatch";
    swatch.style.backgroundColor = colour;
    palette.appendChild(swatch);
});

// Clone tiles on the canvas, each with its selection outline
const tiles = document.getElementById("tiles");
const ns = "http://www.w3.org/2000/svg";
function addRect(x, y, w, h, attrs) {
    const rect = document.createElementNS(ns, "rect");
    rect.setAttribute("x", x);
    rect.setAttribute("y", y);
    rect.setAttribute("width", w);
    rect.setAttribute("height", h);
    Object.keys(attrs).forEach(function (key) {
        rect.setAttribute(key, attrs[key]);
    });
    tiles.appendChild(rect);
}
const rowTops = [197, 266, 335, 404];
rowTops.forEach(function (top) {
    for (let col = 0; col < 3; col++) {
        const left = 82 + col * 102;
        addRect(left, top, 106, 72, { fill: "#803300" });
    }
});
rowTops.forEach(function (top) {
    for (let col = 0; col < 3; col++) {
        const left = 82 + col * 102;
        addRect(left + 7.5, top + 7.5, 92, 57, { fill: "#fff", stroke: "#b98a6c", "stroke-width": 1 });
    }
});
rowTops.forEach(function (top) {
    for (let col = 0; col < 3; col++) {
        const left = 82.5 + col * 102;
        addRect(left, top + 0.5, 105, 71, { fill: "none", stroke: "#fff", "stroke-width": 1 });
        addRect(left, top + 0.5, 105, 71, { fill: "none", stroke: "#000", "stroke-width": 1, "stroke-dasharray": "3 3" });
    }
});
```
